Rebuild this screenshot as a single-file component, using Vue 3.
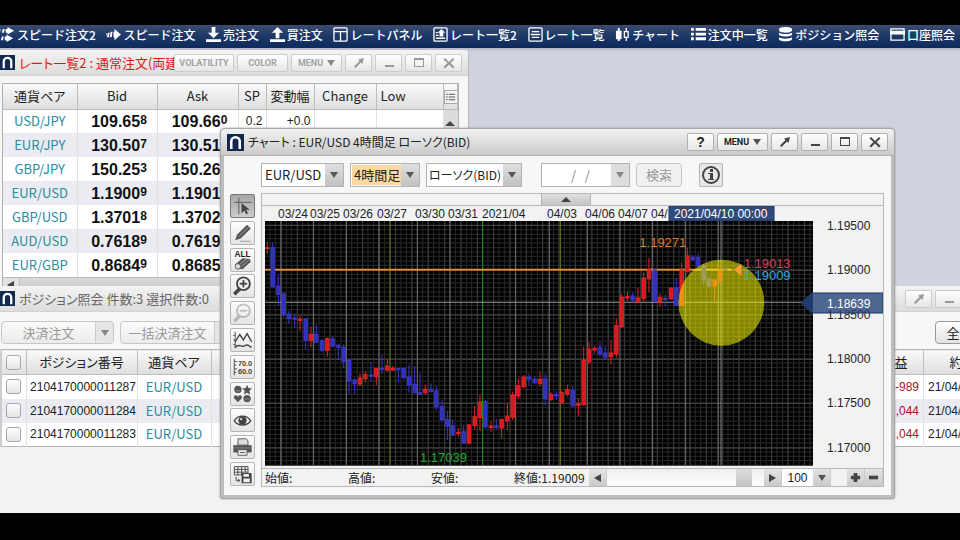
<script setup>
const navItems = [
  { label: 'スピード注文2', fill: 'M8 0l7 4-7 4V6H6V2h2zM3 2h2L4 6H2zM0 3h1L0 5zM7 8l7 4-7 4v-2H5v-4h2zM2 10h2l-1 4H1z' },
  { label: 'スピード注文', fill: 'M9 2l7 6-7 6v-3H8V5h1zM5 5h2l-1 6H4zM2 6h2l-1 5H1zM0 7h1l-1 3z' },
  { label: '売注文', fill: 'M6 0h4v6h4l-6 6-6-6h4zM0 13h16v3H0z' },
  { label: '買注文', fill: 'M8 0l6 6h-4v6H6V6H2zM0 13h16v3H0z' },
  { label: 'レートパネル', stroke: 'M2 1h12a1 1 0 0 1 1 1v12a1 1 0 0 1-1 1H2a1 1 0 0 1-1-1V2a1 1 0 0 1 1-1zM1 5h14M8 5v10' },
  { label: 'レート一覧2', stroke: 'M2 1h12a1 1 0 0 1 1 1v12a1 1 0 0 1-1 1H2a1 1 0 0 1-1-1V2a1 1 0 0 1 1-1zM3 12h10M3 9h3M3 6h2', fill: 'M9 2l4 4h-2v4H7V6H5z' },
  { label: 'レート一覧', stroke: 'M2 1h12a1 1 0 0 1 1 1v12a1 1 0 0 1-1 1H2a1 1 0 0 1-1-1V2a1 1 0 0 1 1-1zM4 5h8M3 8h10M4 11h8' },
  { label: 'チャート', fill: 'M1 4h6v9H1zM3 1h2v14H3z', stroke: 'M10 5h4v6h-4zM12 1v4M12 11v4' },
  { label: '注文中一覧', fill: 'M0 1h3v3H0zM5 1h11v3H5zM0 6h3v3H0zM5 6h11v3H5zM0 11h3v3H0zM5 11h11v3H5z' },
  { label: 'ポジション照会', fill: 'M8 0c5 0 7 1 7 3s-2 3-7 3-7-1-7-3 2-3 7-3zM1 6c2 2 12 2 14 0v2c-1 3-13 3-14 0zM1 11c2 2 12 2 14 0v2c-1 3-13 3-14 0z' },
  { label: '口座照会', fill: 'M0 4h16v4H0z', stroke: 'M1 2h14v12H1z' }
]

const rates = [
  ['USD/JPY', '109.65', '8', '109.66', '0', '0.2', '+0.0'],
  ['EUR/JPY', '130.50', '7', '130.51', '1', '0.4', '+0.0'],
  ['GBP/JPY', '150.25', '3', '150.26', '2', '0.9', '+0.0'],
  ['EUR/USD', '1.1900', '9', '1.1901', '3', '0.4', '+0.0'],
  ['GBP/USD', '1.3701', '8', '1.3702', '8', '1.0', '+0.0'],
  ['AUD/USD', '0.7618', '9', '0.7619', '8', '0.9', '+0.0'],
  ['EUR/GBP', '0.8684', '9', '0.8685', '9', '1.0', '+0.0']
]

const positions = [
  ['2104170000011287', 'EUR/USD', '-989', '21/04/17'],
  ['2104170000011284', 'EUR/USD', '-1,044', '21/04/17'],
  ['2104170000011283', 'EUR/USD', '-1,044', '21/04/17']
]

const tools = ['cursor', 'pencil', 'erase', 'zoomin', 'zoomout', 'indicator', 'scale', 'marks', 'eye', 'print', 'save']

const dates = [
  [278, '03/24'], [310, '03/25'], [343, '03/26'], [377, '03/27'], [415, '03/30'], [448, '03/31'],
  [482, '2021/04'], [547, '04/03'], [585, '04/06'], [618, '04/07'], [651, '04/']
]
const prices = [[230, '1.19500'], [274, '1.19000'], [319, '1.18500'], [363, '1.18000'], [407, '1.17500'], [452, '1.17000']]

/* The plot is drawn in thirds of a pixel: 1644 x 732 units. */
const PITCH = 16.36
const minorX = Array.from({ length: 100 }, (_, i) => Math.round(15 + i * PITCH))
const midX = Array.from({ length: 33 }, (_, i) => Math.round(48 + i * PITCH * 3))
const minorY = Array.from({ length: 55 }, (_, i) => Math.round(13 + i * 13.33))
const majorY = [13, 148, 282, 415, 547, 681]
const dayX = [48, 145, 244, 342, 457, 555, 752, 853, 967, 1065, 1163, 1262, 1360]

/* up?, high, body top, body bottom, low */
const candles = [
  [1, 66, 83, 86, 103], [0, 68, 82, 199, 202], [0, 166, 198, 223, 258], [0, 216, 222, 284, 292],
  [0, 272, 282, 296, 312], [0, 286, 294, 298, 325], [1, 287, 298, 301, 332], [0, 294, 297, 361, 388],
  [1, 320, 343, 361, 382], [0, 313, 343, 367, 370], [0, 358, 362, 391, 398], [1, 353, 356, 391, 410],
  [0, 347, 357, 378, 383], [0, 370, 376, 382, 418], [0, 373, 382, 424, 445], [0, 420, 421, 483, 523],
  [0, 474, 480, 491, 522], [1, 460, 474, 492, 499], [1, 454, 464, 476, 488], [0, 425, 465, 468, 485],
  [1, 444, 445, 470, 496], [0, 405, 445, 448, 463], [1, 420, 438, 450, 455], [1, 437, 445, 450, 453],
  [0, 444, 446, 448, 488], [0, 444, 445, 472, 480], [0, 434, 471, 495, 518], [0, 438, 493, 518, 520],
  [0, 458, 518, 523, 525], [1, 494, 508, 518, 525], [0, 490, 508, 514, 518], [0, 497, 513, 560, 572],
  [0, 540, 559, 599, 607], [0, 573, 598, 619, 660], [0, 598, 618, 645, 650], [1, 624, 637, 640, 650],
  [0, 616, 635, 670, 671], [1, 612, 615, 669, 675], [1, 558, 590, 617, 628], [1, 525, 546, 593, 632],
  [0, 540, 545, 621, 625], [1, 604, 618, 622, 636], [0, 597, 618, 622, 628], [1, 595, 599, 624, 655],
  [1, 552, 588, 603, 630], [1, 515, 525, 592, 600], [1, 475, 497, 528, 537], [1, 465, 471, 500, 505],
  [0, 461, 471, 477, 499], [0, 468, 477, 488, 492], [1, 454, 478, 490, 500], [0, 460, 477, 537, 557],
  [1, 517, 523, 538, 543], [0, 513, 524, 528, 540], [1, 512, 518, 548, 550], [1, 494, 509, 523, 530],
  [0, 498, 510, 557, 563], [1, 534, 552, 556, 587], [1, 380, 421, 554, 557], [1, 367, 388, 425, 433],
  [1, 378, 385, 390, 400], [0, 364, 383, 402, 410], [0, 378, 399, 411, 418], [1, 360, 399, 410, 433],
  [1, 297, 317, 402, 413], [1, 222, 232, 320, 323], [1, 214, 230, 234, 243], [0, 216, 228, 240, 247],
  [1, 203, 234, 246, 248], [1, 157, 174, 235, 245], [1, 114, 148, 177, 216], [0, 145, 150, 244, 246],
  [1, 220, 233, 246, 260], [0, 222, 235, 238, 260], [1, 203, 204, 236, 240], [0, 174, 203, 257, 258],
  [1, 127, 150, 256, 258], [1, 83, 108, 155, 158], [0, 104, 112, 118, 124], [0, 100, 113, 138, 141],
  [0, 130, 138, 180, 196], [0, 170, 178, 198, 200], [1, 178, 180, 198, 245], [1, 148, 150, 182, 190],
  [0, 142, 148, 150, 152]
].map(([up, hi, top, bottom, lo], i) => ({
  cls: up ? 'up' : 'down',
  x: Math.round(7 + i * PITCH),
  hi: hi - 3,
  lo: lo - 3,
  top: top - 3,
  h: Math.max(3, bottom - top)
}))
</script>

<template>
  <div class="screen">
    <nav class="nav">
      <a v-for="item in navItems" :key="item.label" class="nav-item" href="#">
        <svg class="nav-icon" viewBox="0 0 16 16" aria-hidden="true">
          <path v-if="item.stroke" :d="item.stroke" fill="none" stroke="#fff" stroke-width="1.4" />
          <path v-if="item.fill" :d="item.fill" fill="#fff" />
        </svg>
        <span>{{ item.label }}</span>
      </a>
    </nav>

    <main class="desktop">
      <!-- Rate list -->
      <section class="window rate-window inactive">
        <header class="titlebar">
          <svg class="logo" viewBox="0 0 16 16" aria-hidden="true"><rect width="16" height="16" fill="#12284f" /><path d="M4 14V7a4 4 0 0 1 8 0v7" fill="none" stroke="#fff" stroke-width="2.4" /></svg>
          <h2 class="title alert">レート一覧2 : 通常注文(両建</h2>
          <div class="controls">
            <button class="ctl text-ctl vol">VOLATILITY</button>
            <button class="ctl text-ctl">COLOR</button>
            <button class="ctl text-ctl">MENU <span class="caret"></span></button>
            <button class="ctl" aria-label="切り離し"><svg viewBox="0 0 12 12"><path d="M11 1L9.500 7 8 5.500 2.500 11 1 9.500 6.500 4 5 2.500z" /></svg></button>
            <button class="ctl" aria-label="最小化"><svg viewBox="0 0 12 12"><path d="M2 8h9v2H2z" /></svg></button>
            <button class="ctl" aria-label="最大化"><svg viewBox="0 0 12 12"><path fill-rule="evenodd" d="M1 1h10v9H1zM2 3v6h8V3z" /></svg></button>
            <button class="ctl" aria-label="閉じる"><svg viewBox="0 0 12 12"><path d="M2 1l4 4 4-4 1.500 1.500L7.500 6l4 4L10 11.500l-4-4-4 4L.5 10l4-4-4-3.500z" /></svg></button>
          </div>
        </header>
        <div class="rate-body">
          <table class="grid rate-table">
            <colgroup><col class="w74" /><col class="w80" /><col class="w81" /><col class="w28" /><col class="w48" /><col class="w62" /><col class="w67" /><col /></colgroup>
            <thead>
              <tr>
                <th>通貨ペア</th><th>Bid</th><th>Ask</th><th>SP</th><th>変動幅</th><th>Change</th><th class="left">Low</th>
                <th class="tiny"><button class="list-btn" aria-label="列設定"><svg viewBox="0 0 12 12"><path d="M1 2h2v1H1zM4 2h7v1H4zM1 5h2v1H1zM4 5h7v1H4zM1 8h2v1H1zM4 8h7v1H4z" /></svg></button></th>
              </tr>
            </thead>
            <tbody>
              <tr v-for="(r, i) in rates" :key="r[0]">
                <td class="pair">{{ r[0] }}</td>
                <td class="quote">{{ r[1] }}<span class="pip">{{ r[2] }}</span></td>
                <td class="quote">{{ r[3] }}<span class="pip">{{ r[4] }}</span></td>
                <td class="num">{{ r[5] }}</td>
                <td class="num">{{ r[6] }}</td>
                <td></td><td></td><td class="vbar"><span v-if="i === 0" class="tri-up"></span></td>
              </tr>
            </tbody>
          </table>
          <div class="hbar"><span class="tri-left"></span><span class="hthumb"></span></div>
        </div>
      </section>

      <!-- Positions -->
      <section class="window pos-window inactive">
        <header class="titlebar">
          <svg class="logo" viewBox="0 0 16 16" aria-hidden="true"><rect width="16" height="16" fill="#12284f" /><path d="M4 14V7a4 4 0 0 1 8 0v7" fill="none" stroke="#fff" stroke-width="2.4" /></svg>
          <h2 class="title">ポジション照会 件数:3 選択件数:0</h2>
          <div class="controls">
            <button class="ctl" aria-label="切り離し"><svg viewBox="0 0 12 12"><path d="M11 1L9.500 7 8 5.500 2.500 11 1 9.500 6.500 4 5 2.500z" /></svg></button>
            <button class="ctl" aria-label="最小化"><svg viewBox="0 0 12 12"><path d="M2 8h9v2H2z" /></svg></button>
            <button class="ctl" aria-label="最大化"><svg viewBox="0 0 12 12"><path fill-rule="evenodd" d="M1 1h10v9H1zM2 3v6h8V3z" /></svg></button>
            <button class="ctl" aria-label="閉じる"><svg viewBox="0 0 12 12"><path d="M2 1l4 4 4-4 1.500 1.500L7.500 6l4 4L10 11.500l-4-4-4 4L.5 10l4-4-4-3.500z" /></svg></button>
          </div>
        </header>
        <div class="actions">
          <div class="split"><button class="act" disabled>決済注文</button><button class="act-arrow" disabled aria-label="決済注文メニュー"><span class="caret"></span></button></div>
          <div class="split"><button class="act" disabled>一括決済注文</button><button class="act-arrow" disabled aria-label="一括決済注文メニュー"><span class="caret"></span></button></div>
          <button class="act-all">全決済注文</button>
        </div>
        <table class="grid pos-table">
          <colgroup><col class="w25" /><col class="w111" /><col class="w74" /><col /><col class="w58" /><col class="w104" /></colgroup>
          <thead>
            <tr><th><input type="checkbox" class="box" aria-label="すべて選択" /></th><th>ポジション番号</th><th>通貨ペア</th><th></th><th>損益</th><th>約定日時</th></tr>
          </thead>
          <tbody>
            <tr v-for="p in positions" :key="p[0]">
              <td><input type="checkbox" class="box" :aria-label="p[0]" /></td>
              <td class="id">{{ p[0] }}</td>
              <td class="pair">{{ p[1] }}</td>
              <td></td>
              <td class="loss">{{ p[2] }}</td>
              <td class="when">{{ p[3] }}</td>
            </tr>
          </tbody>
        </table>
      </section>

      <!-- Chart -->
      <section class="window chart-window">
        <header class="titlebar">
          <svg class="logo" viewBox="0 0 16 16" aria-hidden="true"><rect width="16" height="16" fill="#12284f" /><path d="M4 14V7a4 4 0 0 1 8 0v7" fill="none" stroke="#fff" stroke-width="2.4" /></svg>
          <h2 class="title">チャート : EUR/USD 4時間足 ローソク(BID)</h2>
          <div class="controls">
            <button class="ctl help">?</button>
            <button class="ctl text-ctl">MENU <span class="caret"></span></button>
            <button class="ctl" aria-label="切り離し"><svg viewBox="0 0 12 12"><path d="M11 1L9.500 7 8 5.500 2.500 11 1 9.500 6.500 4 5 2.500z" /></svg></button>
            <button class="ctl" aria-label="最小化"><svg viewBox="0 0 12 12"><path d="M2 8h9v2H2z" /></svg></button>
            <button class="ctl" aria-label="最大化"><svg viewBox="0 0 12 12"><path fill-rule="evenodd" d="M1 1h10v9H1zM2 3v6h8V3z" /></svg></button>
            <button class="ctl" aria-label="閉じる"><svg viewBox="0 0 12 12"><path d="M2 1l4 4 4-4 1.500 1.500L7.500 6l4 4L10 11.500l-4-4-4 4L.5 10l4-4-4-3.500z" /></svg></button>
          </div>
        </header>
        <div class="chart-body">
          <form class="filters" @submit.prevent>
            <label class="combo pair-combo"><select aria-label="通貨ペア"><option>EUR/USD</option></select><span class="drop"><span class="caret"></span></span></label>
            <label class="combo span-combo"><select aria-label="足種"><option>4時間足</option></select><span class="drop"><span class="caret"></span></span></label>
            <label class="combo type-combo"><select aria-label="チャート種類"><option>ローソク(BID)</option></select><span class="drop"><span class="caret"></span></span></label>
            <label class="combo date-combo"><input type="text" value="/   /" aria-label="日付" /><span class="drop"><span class="caret"></span></span></label>
            <button class="search" disabled>検索</button>
            <button class="info" type="button" aria-label="情報"><svg viewBox="0 0 20 20"><circle cx="10" cy="10" r="8" fill="none" stroke="#444" stroke-width="2" /><path d="M9 4h3v3H9zM7 8h5v6h1v1H7v-1h2V9H7z" fill="#444" /></svg></button>
          </form>
          <div class="work">
            <div class="tools">
              <button v-for="t in tools" :key="t" class="tool" :class="{ on: t === 'cursor', off: t === 'zoomout' }" :aria-label="t">
                <svg viewBox="0 0 24 24">
                  <g v-if="t === 'cursor'"><path d="M3 8h19M8 3v18" stroke="#555" /><path d="M11 9v11l3-3 2 4 2-1-2-4h4z" fill="#444" /></g>
                  <g v-else-if="t === 'pencil'"><path d="M4 20l2-6L17 3l4 4L10 18z" fill="#555" /><path d="M8 16L19 5" stroke="#aaa" /><path d="M9 21h12" stroke="#999" /></g>
                  <g v-else-if="t === 'erase'"><text x="12" y="9" text-anchor="middle" class="all">ALL</text><path d="M4 17l8-7 8 1 1 3-9 8-7-1z" fill="#555" /><path d="M11 19l8-7M9 17l8-7" stroke="#aaa" /><ellipse cx="7" cy="19" rx="3" ry="3" fill="#ddd" stroke="#555" /></g>
                  <g v-else-if="t === 'zoomin' || t === 'zoomout'"><path d="M3 21l7-7" stroke="#444" stroke-width="4" /><circle cx="13" cy="9.500" r="7" fill="#eee" stroke="#444" stroke-width="2" /><path d="M9 9.500h8" stroke="#444" stroke-width="2" /><path v-if="t === 'zoomin'" d="M13 5.500v8" stroke="#444" stroke-width="2" /></g>
                  <g v-else-if="t === 'indicator'" fill="none" stroke="#444"><path d="M4 3v18M2 7h2M2 12h2M2 17h2" /><path d="M4 14l5-8 4 6 4-7 5 9" stroke-width="1.500" /><path d="M4 20c4-5 7 1 11-2 3-2 4 1 7 2" stroke-width="1.500" /></g>
                  <g v-else-if="t === 'scale'"><path d="M3 3v18M3 6h3M3 10h2M3 14h3M3 18h2" stroke="#444" fill="none" /><text x="7" y="11" class="digits">70.0</text><text x="7" y="20" class="digits">60.0</text></g>
                  <g v-else-if="t === 'marks'" fill="#555"><circle cx="7" cy="7" r="4" /><path d="M5 8q2 2 4 0" fill="none" stroke="#999" /><path d="M17 2l1.500 3.500 4 .5-3 2.500 1 4-3.500-2-3.500 2 1-4-3-2.500 4-.5z" /><path d="M7 21l-4-4c-2-4 3-5 4-2 1-3 6-2 4 2z" /><circle cx="17" cy="17" r="4" /><path d="M15 18q2-2 4 0" fill="none" stroke="#999" /></g>
                  <g v-else-if="t === 'eye'"><path d="M3 13c4-7 14-7 18 0-4 6-14 6-18 0z" fill="#eee" stroke="#444" stroke-width="1.500" /><circle cx="12" cy="12.500" r="4.500" fill="#444" /><circle cx="10.500" cy="11" r="1.300" fill="#ddd" /></g>
                  <g v-else-if="t === 'print'"><path d="M7 3h9l2 2v5H7z" fill="#ddd" stroke="#555" /><path d="M2 10h20v8H2z" fill="#555" /><path d="M3 13h18" stroke="#888" /><path d="M7 15h10v6H7z" fill="#eee" stroke="#555" /><path d="M9 18h6" stroke="#555" /></g>
                  <g v-else><path d="M3 4h15v9H3zM3 7h15M3 10h15M7 4v9M11 4v9M15 4v6" fill="none" stroke="#444" /><path d="M11 11h10l1 1v10H11z" fill="#444" /><path d="M13 12h6v3h-6zM13 17h7v4h-7z" fill="#eee" /><path d="M5 15v4h4M7 17l2 2-2 2" fill="none" stroke="#444" /></g>
                </svg>
              </button>
            </div>
            <div class="panel">
              <div class="strip"><button class="handle" aria-label="折りたたむ"><span class="tri-up"></span></button></div>
              <svg class="plot" viewBox="262 206 621 262" role="img" aria-label="EUR/USD チャート">
                <text v-for="d in dates" :key="d[0]" :x="d[0]" y="218" class="axis">{{ d[1] }}</text>
                <rect x="669" y="206" width="105" height="15" fill="#2f4a7c" stroke="#1a3464" />
                <text x="674" y="218" class="axis light">2021/04/10 00:00</text>
                <text v-for="p in prices" :key="p[1]" x="827" :y="p[0]" class="axis">{{ p[1] }}</text>
                <g transform="translate(265 221) scale(.333333)">
                  <rect width="1644" height="732" fill="#000" />
                  <g stroke-width="3">
                    <path v-for="x in minorX" :key="'x' + x" :d="`M${x} 0V732`" stroke="#2a2a2a" />
                    <path v-for="y in minorY" :key="'y' + y" :d="`M0 ${y}H1644`" stroke="#2a2a2a" />
                    <path v-for="x in midX" :key="'m' + x" :d="`M${x} 0V732`" stroke="#3c3c3c" />
                    <path v-for="y in majorY" :key="'j' + y" :d="`M0 ${y}H1644`" stroke="#484848" />
                    <path v-for="x in dayX" :key="'d' + x" :d="`M${x} 0V732`" stroke="#707070" />
                    <path d="M375 0V732M886 0V732" stroke="#77771c" />
                    <path d="M653 0V732" stroke="#1f9a2a" />
                    <path d="M0 244H1644M1368 0V732" stroke="#8c8c8c" />
                    <path d="M0 146H1400" stroke="#e6952c" stroke-width="5" />
                  </g>
                  <g v-for="c in candles" :key="c.x" :class="c.cls">
                    <path :d="`M${c.x} ${c.hi}V${c.lo}`" stroke-width="3" />
                    <rect :x="c.x - 5" :y="c.top" width="10" :height="c.h" stroke-width="3" />
                  </g>
                  <circle cx="1369" cy="245" r="129" fill="#ff0" fill-opacity=".52" />
                  <path d="M1407 146l22-18v36z" fill="#ff9b35" />
                  <text x="1123" y="78" class="mark" fill="#e07a2c">1.19271</text>
                  <text x="1436" y="140" class="mark" fill="#d83c5c">1.19013</text>
                  <text x="1436" y="178" class="mark" fill="#2fa8e0">1.19009</text>
                  <text x="465" y="722" class="mark" fill="#22a830">1.17039</text>
                </g>
                <path d="M801 303l11-10h71v20h-71z" fill="#2b477b" fill-opacity=".82" stroke="#1b3464" />
                <path d="M801 303l11-10v20z" fill="#1f3c70" />
                <text x="827" y="308" class="axis light">1.18639</text>
              </svg>
              <div class="status">
                <span class="ohlc">始値:</span><span class="ohlc">高値:</span><span class="ohlc">安値:</span><span class="ohlc">終値:1.19009</span>
                <button class="step" aria-label="前へ"><span class="tri-left"></span></button>
                <div class="track"><span class="thumb"></span></div>
                <button class="step" aria-label="次へ"><span class="tri-right"></span></button>
                <input class="count" type="text" value="100" aria-label="表示本数" />
                <button class="step" aria-label="表示本数を選ぶ"><span class="caret"></span></button>
                <span class="gap"></span>
                <button class="step" aria-label="拡大"><svg viewBox="0 0 12 12"><path d="M4 1h4v3h3v4H8v3H4V8H1V4h3z" /></svg></button>
                <button class="step" aria-label="縮小"><svg viewBox="0 0 12 12"><path d="M1 4h10v4H1z" /></svg></button>
              </div>
            </div>
          </div>
        </div>
      </section>
    </main>
  </div>
</template>

<style>
body { background: #000; }
</style>

<style scoped>
* { box-sizing: border-box; }
.screen {
  display: flex;
  flex-direction: column;
  height: 100vh;
  padding: 25px 0 27px;
  background: #000;
  color: #222;
  font: 13px/16px "Noto Sans CJK JP", sans-serif;
  font-feature-settings: "palt";
}
button, input, select { margin: 0; padding: 0; font: inherit; color: inherit; font-feature-settings: inherit; }
.nav {
  display: flex;
  justify-content: space-between;
  align-items: center;
  flex: 0 0 23px;
  padding: 0 5px 4px 0;
  background: linear-gradient(#3b4b70, #1c3868 50%, #0e2a5c);
  font-size: 12px;
  font-weight: 500;
  font-feature-settings: normal;
}
.nav-item { display: flex; align-items: center; gap: 2px; color: #fff; text-decoration: none; white-space: nowrap; }
.nav-icon { width: 15px; height: 15px; }
.desktop { position: relative; flex: 1; overflow: hidden; background: linear-gradient(#b4b8c6, #d0d3df 4px); }

.window { position: absolute; background: #f7f7f7; }
.titlebar { display: flex; align-items: center; gap: 4px; background: linear-gradient(#f4f4f4, #dcdcdc); }
.logo { flex: none; width: 17px; height: 17px; }
.title { flex: 1; min-width: 0; margin: 0; overflow: hidden; font-size: 13px; line-height: 18px; font-weight: 400; white-space: nowrap; }
.title.alert { color: #e01818; }
.controls { display: flex; flex: none; gap: 3px; }
.ctl {
  display: flex;
  align-items: center;
  justify-content: center;
  gap: 4px;
  width: 27px;
  height: 18px;
  border: 1px solid #b0b0b0;
  border-radius: 2px;
  background: linear-gradient(#fff, #e6e6e6);
}
.ctl svg { width: 12px; height: 12px; fill: #444; }
.text-ctl { width: 51px; font: bold 9px/12px Roboto, sans-serif; }
.text-ctl.vol { width: 60px; }
.help { font: bold 14px/16px "Liberation Sans", sans-serif; }
.caret { flex: none; border: 4px solid transparent; border-top: 6px solid #555; border-bottom: 0; }
.inactive .title:not(.alert) { color: #666; }
.inactive .ctl { color: #a2a2a2; border-color: #ccc; }
.inactive .ctl svg { fill: #999; }
.inactive .caret { border-top-color: #888; }
.tri-up, .tri-left, .tri-right { display: inline-block; width: 0; height: 0; }
.tri-up { border: 5px solid transparent; border-top: 0; border-bottom: 5px solid #444; }
.tri-left { border: 4px solid transparent; border-left: 0; border-right: 7px solid #444; }
.tri-right { border: 4px solid transparent; border-right: 0; border-left: 7px solid #444; }

.rate-window { top: 2px; left: 0; width: 469px; border-right: 1px solid #bbb; border-radius: 0 4px 0 0; }
.rate-window .titlebar, .pos-window .titlebar { height: 26px; padding-right: 6px; border-bottom: 1px solid #d2d2d2; border-radius: 0 4px 0 0; }
.rate-window .titlebar .title { margin-right: -4px; }
.rate-window .logo, .pos-window .logo { width: 15px; }
.rate-body { margin: 7px 9px 0 2px; border: 1px solid #b0b0b0; background: #fff; }

.grid { width: 100%; border-collapse: collapse; table-layout: fixed; }
.grid th, .grid td { height: 24px; padding: 0; overflow: hidden; text-align: center; white-space: nowrap; }
.grid th { height: 25px; border-right: 1px solid #bdbdbd; border-bottom: 1px solid #bdbdbd; background: linear-gradient(#fafafa, #dedede); font-weight: 400; }
.grid td { border-right: 1px solid #e0e1e6; background: #fff; }
.grid tr:nth-child(even) td { background: #ebecf1; }
.grid .left { padding-left: 4px; text-align: left; }
.grid .pair { color: #2b8c9e; }
.grid .quote { padding: 1px 0 0 4px; color: #111; font: bold 16px/22px "Liberation Sans", sans-serif; }
.pip { display: inline-block; font-size: 12px; line-height: 12px; vertical-align: 3px; }
.grid .num { padding-right: 3px; text-align: right; font: 12px/16px "Liberation Sans", sans-serif; }
.w25 { width: 25px; } .w28 { width: 28px; } .w48 { width: 48px; } .w58 { width: 58px; } .w62 { width: 62px; } .w67 { width: 67px; }
.w74 { width: 74px; } .w80 { width: 80px; } .w81 { width: 81px; } .w104 { width: 104px; } .w111 { width: 111px; }
.list-btn { display: inline-flex; align-items: center; justify-content: center; width: 14px; height: 14px; border: 1px solid #aaa; background: #f4f4f4; vertical-align: middle; }
.list-btn svg { flex: none; width: 11px; height: 11px; fill: #555; }
.grid .vbar, .grid tr:nth-child(even) .vbar { border-left: 1px solid #bbb; background: #dcdcdc; line-height: 12px; }
.hbar { display: flex; align-items: center; gap: 5px; height: 14px; padding-left: 4px; background: #e2e2e2; border-top: 1px solid #bbb; }
.hthumb { flex: 1; height: 13px; border-left: 1px solid #bbb; background: linear-gradient(#dadada, #c8c8c8); }

.pos-window { top: 238px; right: -68px; bottom: 0; left: 0; background: #f2f2f2; }
.actions { display: flex; gap: 6px; padding: 9px 0 5px 1px; background: #f7f7f7; }
.split { display: flex; height: 23px; border: 1px solid #c6c6c6; border-radius: 4px; background: linear-gradient(#fbfbfb, #ebebeb); overflow: hidden; }
.act { width: 93px; border: 0; background: none; color: #999; }
.act-arrow { display: flex; align-items: center; justify-content: center; width: 18px; border: 0; border-left: 1px solid #ccc; background: #e6e6e6; }
.act-all { width: 88px; height: 23px; margin-left: auto; margin-right: 5px; border: 1px solid #999; border-radius: 4px; background: linear-gradient(#fff, #e2e2e2); }
.pos-table { border: 1px solid #b4b4b4; border-left: 2px solid #ccc; }
.box { appearance: none; display: block; width: 15px; height: 15px; margin: 0 auto; border: 1px solid #a8a8a8; border-radius: 3px; background: linear-gradient(#fff, #e4e4e4); }
.id, .loss, .when { font: 12px/16px "Liberation Sans", sans-serif; }
.grid .id { padding-left: 3px; }
.grid .loss { padding-right: 4px; text-align: right; color: #a81420; }
.grid .when { padding-left: 4px; text-align: left; }

.chart-window { top: 80px; left: 220px; width: 675px; border: 1px solid #a8a8a8; border-radius: 5px 5px 3px 3px; background: #bdbdbd; padding: 0 3px 3px; box-shadow: 0 0 2px #888; }
.chart-window .titlebar { height: 27px; margin: 0 -3px; padding: 0 6px; border-bottom: 1px solid #b0b0b0; border-radius: 4px 4px 0 0; background: linear-gradient(#f2f2f2, #cacaca); }
.chart-window .title { font-size: 12px; }
.chart-body { padding: 7px 7px 8px 6px; background: #f7f7f7; }
.filters { display: flex; gap: 6px; height: 24px; margin: 0 0 6px 31px; }
.combo { display: flex; height: 24px; border: 1px solid #b4b4b4; background: #fff; }
.combo select, .combo input { flex: 1; min-width: 0; margin: 1px 0 1px 1px; padding: 0 0 0 2px; border: 0; border-radius: 0; appearance: none; background: #fff; }
.drop { display: flex; align-items: center; justify-content: center; flex: 0 0 18px; background: linear-gradient(#dedede, #c2c2c2); }
.pair-combo { width: 83px; }
.span-combo { width: 70px; }
.combo.span-combo select { background: #fcd9a0; }
.type-combo { width: 96px; }
.combo.type-combo select { font-size: 12px; padding-left: 1px; }
.date-combo { width: 89px; margin-left: 13px; }
.combo.date-combo input { padding-left: 28px; color: #888; white-space: pre; }
.date-combo .drop { background: #ddd; }
.date-combo .caret { border-top-color: #888; }
.search { width: 46px; border: 1px solid #c4c4c4; border-radius: 4px; background: #f1f1f1; color: #999; }
.info { display: flex; width: 24px; margin-left: 11px; padding: 1px; border: 1px solid #b4b4b4; border-radius: 2px; background: #e8e8e8; }
.work { display: flex; gap: 6px; }
.tools { display: flex; flex-direction: column; justify-content: space-between; flex: none; width: 25px; padding: 1px 0; }
.tool { height: 24px; border: 1px solid #b4b4b4; border-radius: 2px; background: linear-gradient(#fdfdfd, #e4e4e4); }
.tool svg { display: block; width: 23px; height: 22px; }
.tool.on { border-color: #777; background: linear-gradient(#a8a8a8, #ccc); }
.tool.off svg { opacity: .3; }
.all { font: bold 9px "Liberation Sans", sans-serif; fill: #222; }
.digits { font: bold 8px "Liberation Sans", sans-serif; fill: #444; }
.panel { flex: 1; min-width: 0; border: 1px solid #b8b8b8; background: #f2f2f2; }
.strip { display: flex; justify-content: center; height: 12px; border-bottom: 1px solid #b8b8b8; padding-right: 14px; }
.handle { display: flex; align-items: center; justify-content: center; width: 50px; border: 1px solid #b4b4b4; border-top: 0; border-bottom: 0; background: linear-gradient(#e0e0e0, #c4c4c4); }
.plot { display: block; width: 100%; height: auto; }
.axis { font: 12px "Liberation Sans", sans-serif; fill: #222; }
.axis.light { fill: #fff; }
.mark { font: 39px "Liberation Sans", sans-serif; }
.up path, .up rect { stroke: #ec2024; fill: #d01c20; }
.down path, .down rect { stroke: #3838d0; fill: #3030b4; }
.status { display: flex; height: 18px; border-top: 1px solid #b8b8b8; }
.ohlc { flex: 0 0 83px; padding-left: 3px; font-size: 12px; line-height: 17px; white-space: nowrap; }
.ohlc:nth-child(4) { flex-basis: 78px; }
.step { display: flex; align-items: center; justify-content: center; flex: 0 0 18px; border: 0; border-right: 1px solid #ccc; background: linear-gradient(#e4e4e4, #cacaca); }
.step svg { width: 11px; height: 11px; fill: #444; }
.track { display: flex; justify-content: flex-end; flex: 1; padding-right: 12px; background: linear-gradient(#eee, #fff); }
.thumb { width: 16px; background: linear-gradient(#dcdcdc, #c4c4c4); }
.count { width: 31px; border: 0; background: #fff; text-align: center; font: 12px/16px "Liberation Sans", sans-serif; }
.gap { flex: 0 0 16px; }
</style>
